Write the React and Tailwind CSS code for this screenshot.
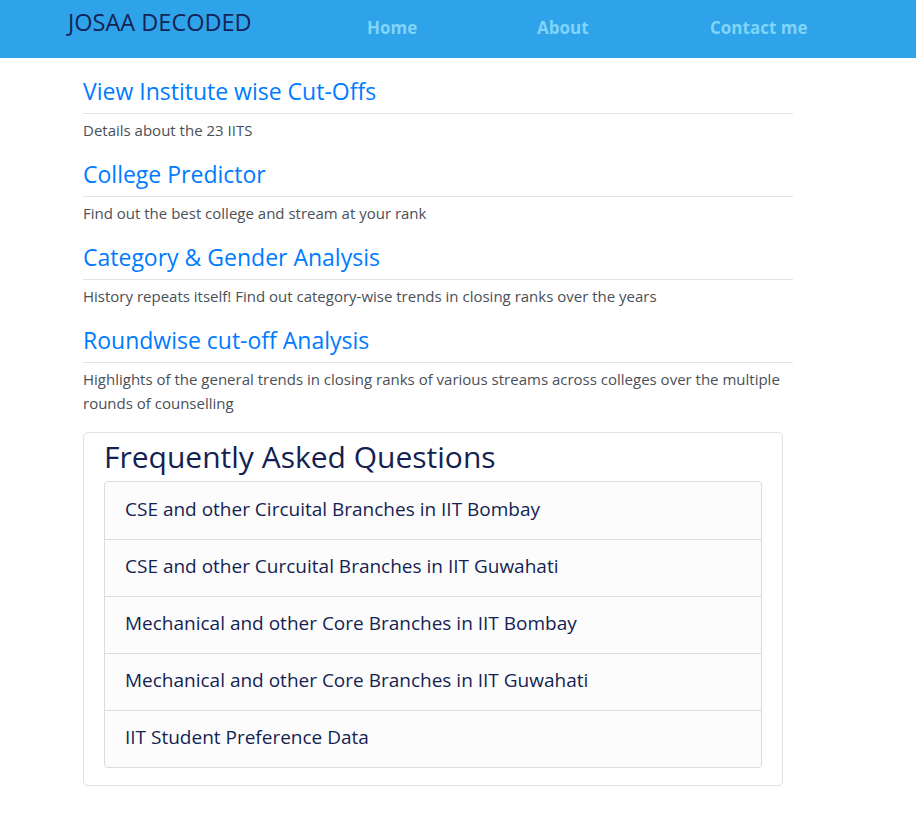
import React from "react";

const sections = [
  { title: "View Institute wise Cut-Offs", text: "Details about the 23 IITS" },
  { title: "College Predictor", text: "Find out the best college and stream at your rank" },
  { title: "Category & Gender Analysis", text: "History repeats itself! Find out category-wise trends in closing ranks over the years" },
  {
    title: "Roundwise cut-off Analysis",
    text: "Highlights of the general trends in closing ranks of various streams across colleges over the multiple rounds of counselling",
  },
];

const faqs = [
  "CSE and other Circuital Branches in IIT Bombay",
  "CSE and other Curcuital Branches in IIT Guwahati",
  "Mechanical and other Core Branches in IIT Bombay",
  "Mechanical and other Core Branches in IIT Guwahati",
  "IIT Student Preference Data",
];

const App = () => {
  return (
    <div className="min-h-screen bg-white font-['Segoe_UI','Open_Sans',sans-serif]">
      <nav className="h-[58px] bg-[#2fa3ea] flex items-start">
        <div className="pl-[68px] pt-[5px] w-[367px] text-[23.5px] text-[#142456]">JOSAA DECODED</div>
        <div className="flex pt-[15px] text-[17px] font-bold text-[#7fd4f8]">
          <a href="#" className="w-[170px]">Home</a>
          <a href="#" className="w-[173px]">About</a>
          <a href="#">Contact me</a>
        </div>
      </nav>

      <main className="ml-[83px] w-[710px] pt-[18px]">
        {sections.map((s) => (
          <div key={s.title} className="mb-[17px]">
            <h2 className="text-[23px] leading-[30px] text-[#007bff] pb-[7px] border-b border-[#e3e3e3]">
              <a href="#">{s.title}</a>
            </h2>
            <p className="mt-[4px] text-[15px] leading-[24px] text-[#495057]">{s.text}</p>
          </div>
        ))}

        <div className="mt-[1px] w-[700px] border border-[#dfdfdf] rounded-[5px] px-[20px] pb-[17px]">
          <h3 className="text-[30px] leading-[48px] text-[#141f52]">Frequently Asked Questions</h3>
          <ul className="border border-[#dcdcdc] rounded-[4px] bg-[#fcfcfc]">
            {faqs.map((f, i) => (
              <li
                key={f}
                className={`h-[57px] flex items-center px-[20px] pb-[3px] text-[19px] text-[#141f52] ${i > 0 ? "border-t border-[#dcdcdc]" : ""}`}
              >
                {f}
              </li>
            ))}
          </ul>
        </div>
      </main>
    </div>
  );
};

export default App;
